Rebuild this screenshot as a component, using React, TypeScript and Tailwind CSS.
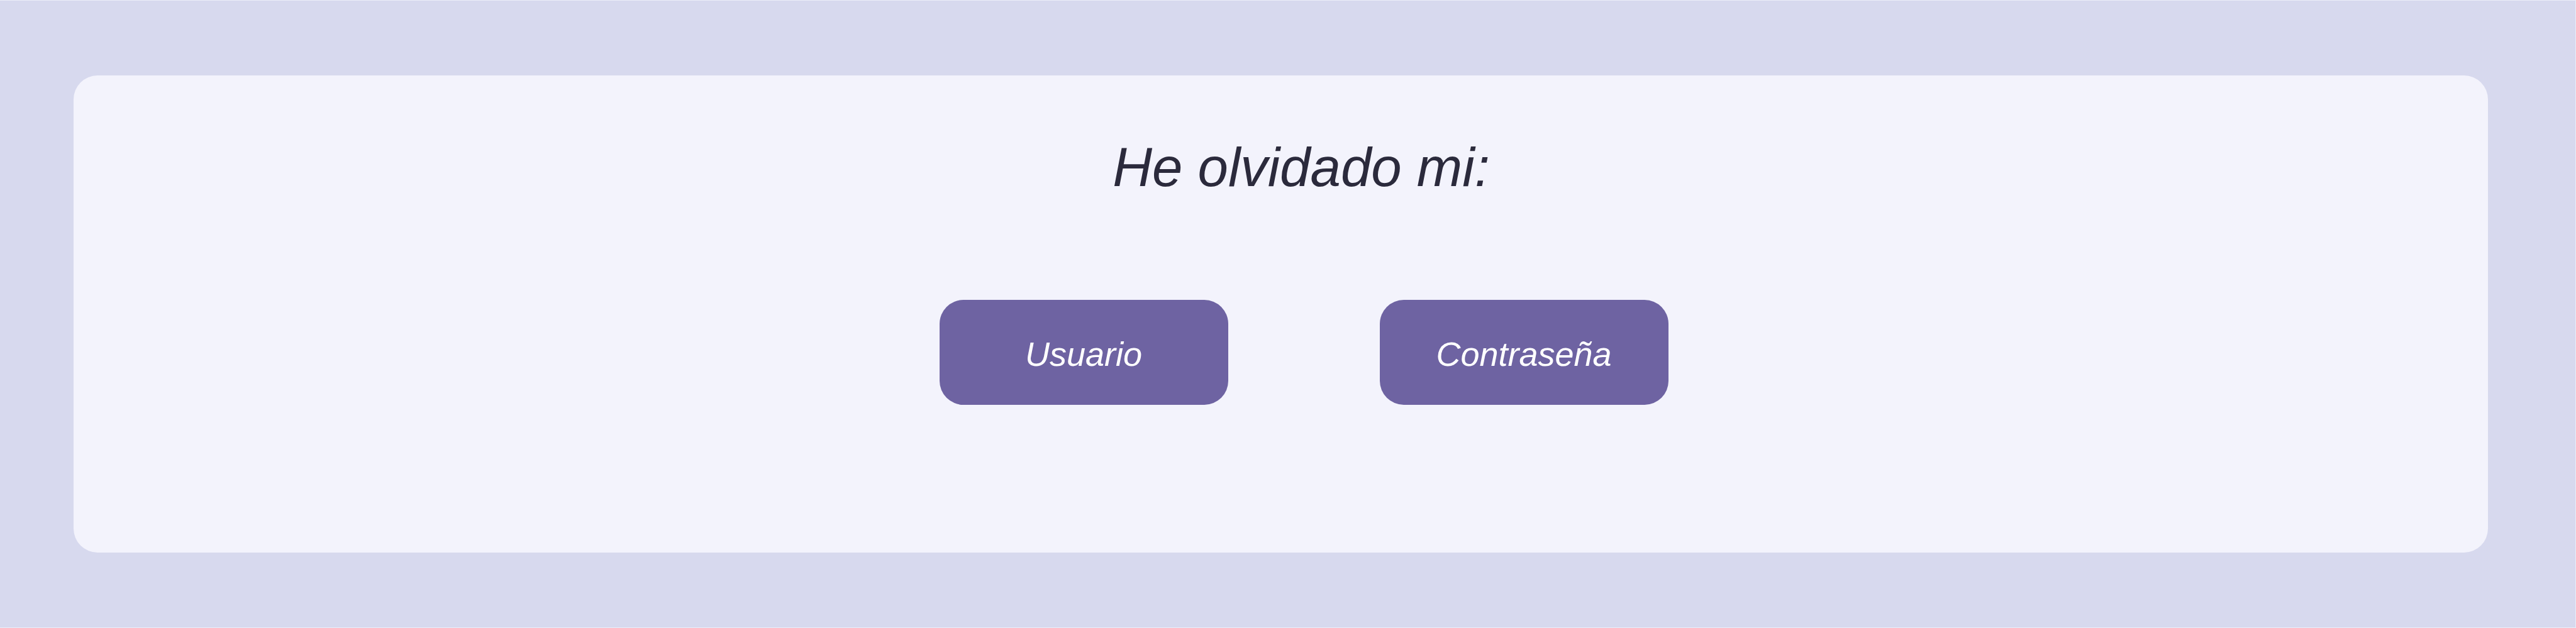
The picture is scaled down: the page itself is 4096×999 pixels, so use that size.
const choices = ["Usuario", "Contraseña"];

function ChoiceButton({ label }: { label: string }) {
  return (
    <button
      type="button"
      className="h-[167px] w-[459px] cursor-pointer rounded-[38px] bg-[#6e63a2] pt-1 text-[54px] leading-[60px] text-white italic"
    >
      {label}
    </button>
  );
}

export default function App() {
  return (
    <div className="flex min-h-screen flex-col border-t border-r border-b border-[#ebecf8] bg-[#d7d9ee] pt-[119px] pr-[139px] pb-[119px] pl-[117px] font-['Liberation_Sans',Arial,sans-serif]">
      <main className="flex flex-1 flex-col items-center rounded-[38px] bg-[#f3f3fc] pt-24 pl-[73px]">
        <h1 className="pr-2 text-[87px] leading-[100px] font-normal text-[#2b2a3c] italic">
          He olvidado mi:
        </h1>
        <div className="mt-[161px] flex gap-[241px]">
          {choices.map((label) => (
            <ChoiceButton key={label} label={label} />
          ))}
        </div>
      </main>
    </div>
  );
}
